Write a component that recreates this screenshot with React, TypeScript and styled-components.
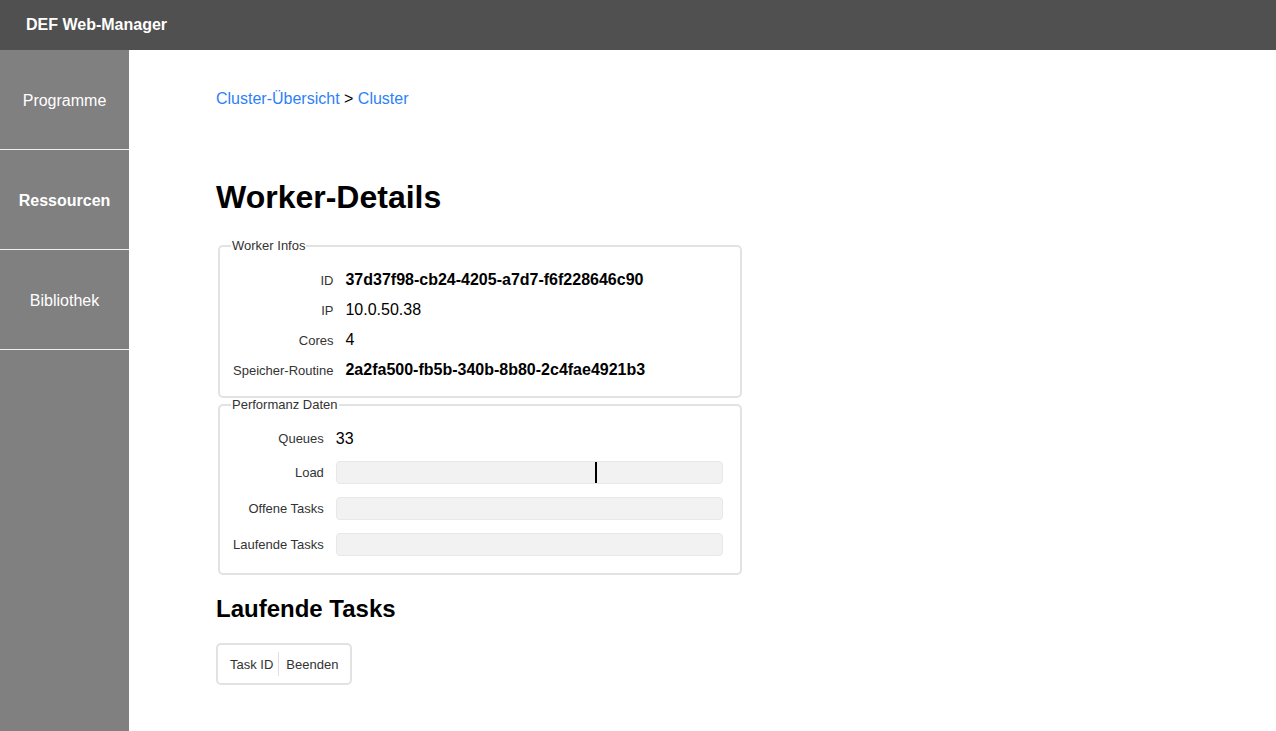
import React from "react";
import styled, { createGlobalStyle } from "styled-components";

const Global = createGlobalStyle`
  html, body { margin: 0; padding: 0; height: 100%; }
  body { font-family: "Liberation Sans", Arial, Helvetica, sans-serif; background: #fff; color: #000; }
  #root { height: 100%; }
`;

const Page = styled.div`
  display: flex;
  flex-direction: column;
  height: 100vh;
  overflow: hidden;
`;

const Header = styled.header`
  height: 50px;
  flex: 0 0 50px;
  background: #505050;
  display: flex;
  align-items: center;
  padding-left: 26px;
  color: #fff;
  font-weight: bold;
  font-size: 16px;
`;

const Body = styled.div`
  flex: 1;
  display: flex;
  min-height: 0;
`;

const Sidebar = styled.nav`
  width: 129px;
  flex: 0 0 129px;
  background: #808080;
  display: flex;
  flex-direction: column;
`;

const NavItem = styled.a<{ $active?: boolean }>`
  box-sizing: border-box;
  height: 100px;
  padding-top: 2px;
  border-bottom: 1px solid #f0f0f0;
  display: flex;
  align-items: center;
  justify-content: center;
  color: #fff;
  font-size: 16px;
  font-weight: ${(p) => (p.$active ? "bold" : "normal")};
  text-decoration: none;
  cursor: pointer;
`;

const Main = styled.main`
  flex: 1;
  padding: 40px 0 0 87px;
`;

const Breadcrumb = styled.div`
  font-size: 16px;
  line-height: 18px;
  color: #000;
`;

const Crumb = styled.a`
  color: #2d7ff9;
  text-decoration: none;
`;

const Title = styled.h1`
  margin: 71px 0 23px;
  font-size: 32px;
  line-height: 37px;
  font-weight: bold;
`;

const Fieldset = styled.fieldset<{ $pt: number; $pb: number }>`
  width: 524px;
  box-sizing: border-box;
  margin: 0 0 0 2px;
  border: 2px solid #e2e2e2;
  border-radius: 5px;
  padding: ${(p) => p.$pt}px 17px ${(p) => p.$pb}px 13px;
`;

const Legend = styled.legend`
  font-size: 13px;
  line-height: 14px;
  color: #333;
  padding: 0 1px;
  margin-left: -2px;
`;

const InfoGrid = styled.div`
  display: grid;
  grid-template-columns: auto 1fr;
  column-gap: 12px;
  grid-auto-rows: 30px;
  align-items: center;
`;

const PerfGrid = styled.div`
  display: grid;
  grid-template-columns: auto 1fr;
  column-gap: 12px;
  row-gap: 13px;
  align-items: center;
`;

const Label = styled.div`
  font-size: 13px;
  color: #333;
  text-align: right;
  white-space: nowrap;
`;

const Value = styled.div<{ $bold?: boolean }>`
  font-size: 16px;
  font-weight: ${(p) => (p.$bold ? "bold" : "normal")};
  color: #000;
  white-space: nowrap;
`;

const QueueValue = styled(Value)`
  height: 19px;
  line-height: 19px;
`;

const Bar = styled.div`
  position: relative;
  height: 21px;
  background: #f2f2f2;
  border: 1px solid #e8e8e8;
  border-radius: 4px;
`;

const Marker = styled.div`
  position: absolute;
  top: 0;
  bottom: 0;
  width: 2px;
  background: #000;
`;

const SubTitle = styled.h2`
  margin: 21px 0 21px;
  font-size: 24px;
  line-height: 26px;
  font-weight: bold;
`;

const TaskTable = styled.div`
  display: inline-flex;
  align-items: center;
  height: 42px;
  box-sizing: border-box;
  border: 2px solid #e2e2e2;
  border-radius: 5px;
  padding: 0 12px;
`;

const HeadCell = styled.div`
  font-size: 13px;
  color: #333;
  padding: 0 5px;
  &:first-child { padding-left: 0; }
  &:last-child { padding-right: 0; padding-left: 7px; }
`;

const Divider = styled.div`
  width: 1px;
  height: 24px;
  background: #dedede;
`;

export default function App() {
  const load = 0.67;
  return (
    <Page>
      <Global />
      <Header>DEF Web-Manager</Header>
      <Body>
        <Sidebar>
          <NavItem>Programme</NavItem>
          <NavItem $active>Ressourcen</NavItem>
          <NavItem>Bibliothek</NavItem>
        </Sidebar>
        <Main>
          <Breadcrumb>
            <Crumb>Cluster-Übersicht</Crumb> &gt; <Crumb>Cluster</Crumb>
          </Breadcrumb>
          <Title>Worker-Details</Title>
          <Fieldset $pt={12} $pb={11}>
            <Legend>Worker Infos</Legend>
            <InfoGrid>
              <Label>ID</Label>
              <Value $bold>37d37f98-cb24-4205-a7d7-f6f228646c90</Value>
              <Label>IP</Label>
              <Value>10.0.50.38</Value>
              <Label>Cores</Label>
              <Value>4</Value>
              <Label>Speicher-Routine</Label>
              <Value $bold>2a2fa500-fb5b-340b-8b80-2c4fae4921b3</Value>
            </InfoGrid>
          </Fieldset>
          <Fieldset $pt={17} $pb={17}>
            <Legend>Performanz Daten</Legend>
            <PerfGrid>
              <Label>Queues</Label>
              <QueueValue>33</QueueValue>
              <Label>Load</Label>
              <Bar>
                <Marker style={{ left: `${load * 100}%` }} />
              </Bar>
              <Label>Offene Tasks</Label>
              <Bar />
              <Label>Laufende Tasks</Label>
              <Bar />
            </PerfGrid>
          </Fieldset>
          <SubTitle>Laufende Tasks</SubTitle>
          <TaskTable>
            <HeadCell>Task ID</HeadCell>
            <Divider />
            <HeadCell>Beenden</HeadCell>
          </TaskTable>
        </Main>
      </Body>
    </Page>
  );
}
